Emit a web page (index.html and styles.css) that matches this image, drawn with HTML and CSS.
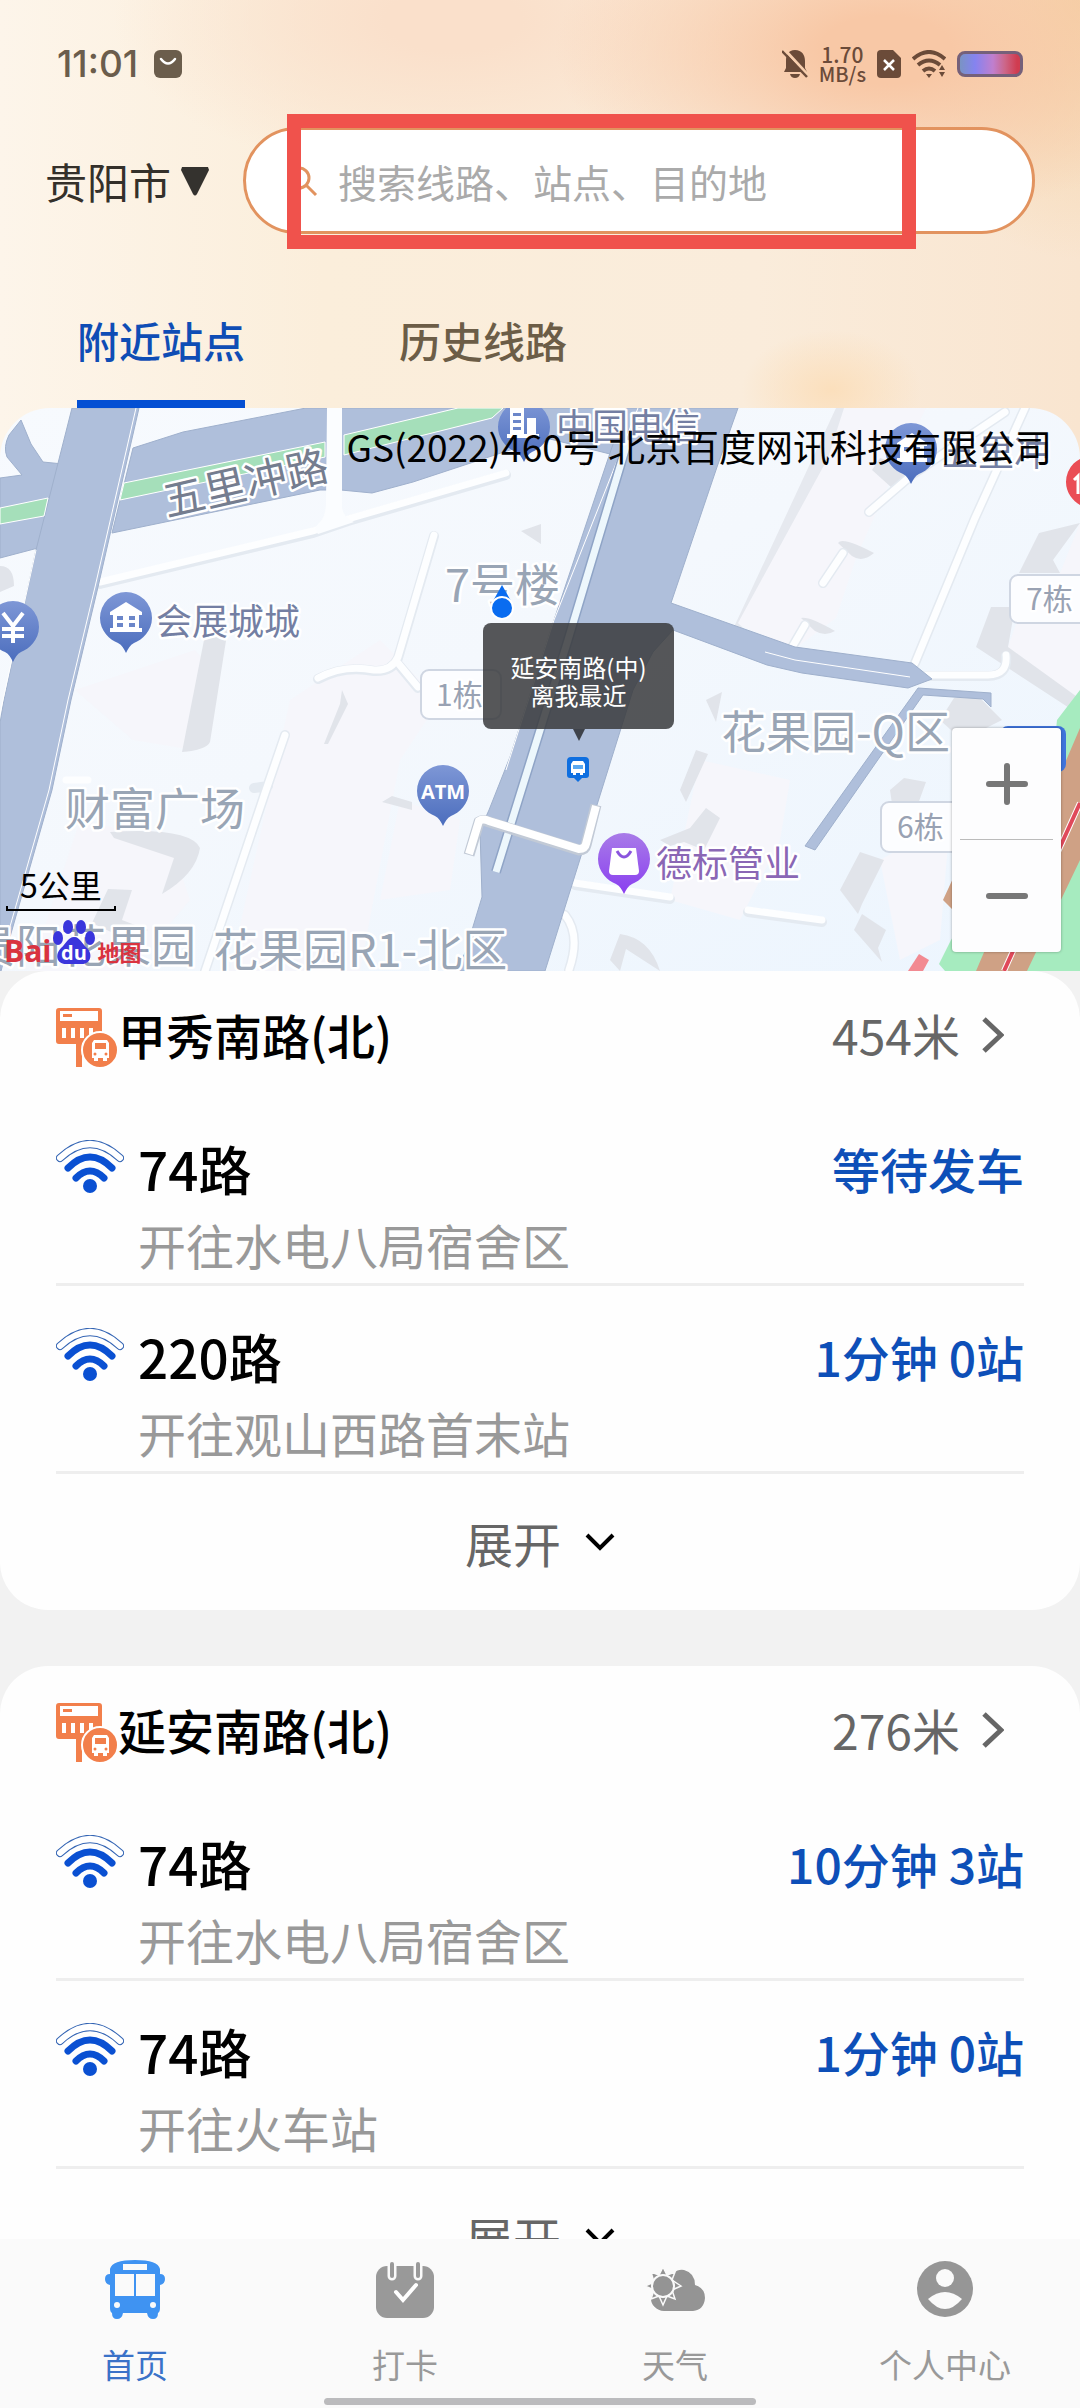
FILE: index.html
```html
<!DOCTYPE html>
<html lang="zh-CN">
<head>
    <meta charset="UTF-8">
    <meta name="viewport" content="width=device-width, initial-scale=1.0">
    <title>附近站点</title>
    <link rel="stylesheet" href="styles.css">
</head>
<body>
    <!-- shared icons -->
    <svg class="defs" width="0" height="0" aria-hidden="true">
        <symbol id="icon-stop" viewBox="0 0 62 62">
            <path fill="#f27f4b" d="M3 1h40a3 3 0 0 1 3 3v32H26v24h-6V37H3a3 3 0 0 1-3-3V4a3 3 0 0 1 3-3z"/>
            <path fill="#fff" d="M4 4h38v10H4zM6 21h4v10H6zM15 21h4v10h-4zM24 21h4v10h-4zM33 21h4v10h-4z"/>
            <rect x="7" y="7" width="9" height="3" fill="#f27f4b"/>
            <circle cx="44" cy="43" r="18" fill="#f27f4b" stroke="#fff" stroke-width="2"/>
            <path fill="#fff" d="M38 33h13l2 3v15h-2v3h-4v-3h-5v3h-4v-3h-2V36z"/>
            <path fill="#f27f4b" d="M39 36h11v6H39z"/>
            <circle cx="39" cy="47" r="1.5" fill="#f27f4b"/>
            <circle cx="50" cy="47" r="1.5" fill="#f27f4b"/>
        </symbol>
        <symbol id="icon-signal" viewBox="0 0 68 54">
            <g fill="none" stroke-linecap="round">
                <path d="M4 18Q34-10 64 18" stroke="#3465b4" stroke-width="8"/>
                <path d="M4 18Q34-10 64 18" stroke="#fff" stroke-width="6"/>
                <path d="M12 28Q34 6 56 28" stroke="#0a50d2" stroke-width="7"/>
                <path d="M20 38Q34 24 48 38" stroke="#0a50d2" stroke-width="7"/>
            </g>
            <circle cx="34" cy="46" r="7" fill="#0a50d2"/>
        </symbol>
        <symbol id="icon-right" viewBox="0 0 22 36">
            <path d="M2 2l17 16L2 34" fill="none" stroke="#666" stroke-width="5"/>
        </symbol>
        <symbol id="icon-down" viewBox="0 0 30 18">
            <path d="M2 2l13 13L28 2" fill="none" stroke="#000" stroke-width="4"/>
        </symbol>
        <symbol id="pin" viewBox="0 0 54 64">
            <path d="M27 1a26 26 0 0 1 26 26c0 13-10 22-18 25-4 2-6 6-8 10-2-4-4-8-8-10C11 49 1 40 1 27A26 26 0 0 1 27 1z"/>
        </symbol>
    </svg>

    <div class="app">
        <div class="top">
            <div class="status-bar">
                <span class="time">11:01</span>
                <svg width="28" height="28" viewBox="0 0 28 28">
                    <rect width="28" height="28" rx="6" fill="#6b5d4c"/>
                    <path d="M7 9q7 9 14 0" fill="none" stroke="#fff" stroke-width="2.5" stroke-linecap="round"/>
                </svg>
                <div class="status-right">
                    <svg width="26" height="30" viewBox="0 0 26 30">
                        <path fill="#6b4b39" d="M13 1c7 0 10 5 10 11v7l2 4H2l2-4v-7C4 6 6 1 13 1zM8 25h10q-1 4-5 4t-5-4z"/>
                        <path d="M2 0l25 27" stroke="#f8cfae" stroke-width="3"/>
                        <path d="M0 2l25 26" stroke="#6b4b39" stroke-width="2.5"/>
                    </svg>
                    <span class="speed"><b>1.70</b>MB/s</span>
                    <svg width="24" height="28" viewBox="0 0 24 28">
                        <path fill="#6b4b39" d="M4 0h12l8 8v16a4 4 0 0 1-4 4H4a4 4 0 0 1-4-4V4a4 4 0 0 1 4-4z"/>
                        <path d="M7 10l10 10M17 10L7 20" stroke="#fff" stroke-width="2.5"/>
                    </svg>
                    <svg width="34" height="28" viewBox="0 0 34 28">
                        <g fill="none" stroke="#6b4b39" stroke-width="4">
                            <path d="M1 9Q17-5 33 9"/>
                            <path d="M6 15q11-9 22 0"/>
                            <path d="M11 21q6-5 12 0"/>
                        </g>
                        <path fill="#6b4b39" d="M14 24h6l-3 4zM27 20l3-5 3 5zM27 22h6l-3 5z"/>
                    </svg>
                    <span class="battery"></span>
                </div>
            </div>

            <div class="search-row">
                <label class="city">
                    <select aria-label="城市">
                        <option>贵阳市</option>
                    </select>
                    <svg width="30" height="30" viewBox="0 0 30 30">
                        <path d="M2 1h26l1 3-12 24q-2 3-4 0L1 4z" fill="#34322e"/>
                    </svg>
                </label>
                <div class="search">
                    <svg width="32" height="32" viewBox="0 0 32 32">
                        <g fill="none" stroke="#e2935f" stroke-width="3">
                            <circle cx="13" cy="13" r="10"/>
                            <path d="M20 20l10 10"/>
                        </g>
                    </svg>
                    <input type="text" placeholder="搜索线路、站点、目的地" aria-label="搜索">
                    <div class="highlight"></div>
                </div>
            </div>

            <div class="tabs">
                <button class="tab active">附近站点</button>
                <button class="tab">历史线路</button>
            </div>

            <div class="map">
                <svg class="map-canvas" viewBox="0 408 1080 563" preserveAspectRatio="xMidYMid slice">
                    <defs>
                        <linearGradient id="land" x1="0" y1="0" x2="1" y2="1">
                            <stop offset="0" stop-color="#f7fafe"/>
                            <stop offset="0.45" stop-color="#f4f8fd"/>
                            <stop offset="1" stop-color="#ecf5fe"/>
                        </linearGradient>
                        <linearGradient id="pin-blue" x1="0" y1="0" x2="0" y2="1">
                            <stop offset="0" stop-color="#7e97d6"/>
                            <stop offset="1" stop-color="#4b6dbd"/>
                        </linearGradient>
                        <linearGradient id="pin-purple" x1="0" y1="0" x2="0" y2="1">
                            <stop offset="0" stop-color="#a87be8"/>
                            <stop offset="1" stop-color="#8a3ff0"/>
                        </linearGradient>
                    </defs>
                    <rect y="408" width="1080" height="563" fill="url(#land)"/>

                    <!-- blocks and buildings -->
                    <g fill="#f6f6fb">
                        <path d="M842 408h84l-30 60-40 90-20 60-40 30-60-24z"/>
                        <path d="M1060 573l20-50v180l-72-56 14-40z"/>
                        <path d="M75 690l120-40 18 20-20 80-60-10z"/>
                        <path d="M80 820l90 20 20 60-60 71H30z"/>
                        <path d="M290 700l90-60 60 60-40 60-40 211H230z"/>
                        <path d="M400 800l60 20-10 70-70 10z"/>
                        <path d="M700 760l90 20-10 60-40 80-70-20z"/>
                        <path d="M880 860l70-40-10 120-40 20z"/>
                    </g>
                    <g fill="#e1e4ea">
                        <path d="M836 408l8 0-16 50-90 165 8 8 40 16-4 4-48-24z" fill="#e6e9ef"/>
                        <path d="M1019 573l20-40 41-10-27 37 7 13zM976 647l15-40h24l-7 40 72 52v16z"/>
                        <path d="M838 543q4-7 36 10-12 10-22 3zM801 618q8-2 34 13-10 6-20 0zM872 470l20 18q20-6 18-20l-30-10z"/>
                        <path d="M204 640l24-12-18 114q-4 8-28 10zM110 832q80-5 90 16-4 26-38 46l12-36-60-20z"/>
                        <path d="M92 923l16-34 24 1-10 30 26 10-20 10zM342 690l6 14-20 40-4 0 16-40z"/>
                        <path d="M382 802l10-6 20 6v8zM0 566q14 0 14 20L0 592z"/>
                        <path d="M521 531l20-7v20zM680 790l16-40 12 4-22 48zM706 700l16-8-6 30z"/>
                        <path d="M660 840l30-12 16-20 14 10-16 32-20-8-14 4zM840 890l20-38 24 8-22 44-4 10zM854 930l8-16 24 16-8 18 4 14zM610 960l10-26q30 4 40 37l-34-22-6 22zM890 790l14-12 22 4-8 22h-26z"/>
                        <path d="M940 720l14-22 24-2 24 24-40 20z"/>
                    </g>

                    <!-- small paths -->
                    <g class="lane lane-shade">
                        <path d="M100 584l213-51 35-12 158-46M434 536l-36 122q-6 14-24 13-30-6-56 8M398 664l20 24M285 735l-20 58-60 178M1025 408l-50 110-60 145M1005 412l-92 62-44 38M843 553l-20 30M805 625l-14 24M924 676h64q20 0 18-20M575 885l95 14M748 912l74 10M565 915q16 20 4 55M254 788l14-2"/>
                    </g>
                    <g class="lane">
                        <path d="M100 582l213-51 35-12 158-46M434 535l-36 122q-6 14-24 13-30-6-56 8M398 663l20 24M285 735l-20 58-60 178M1025 408l-50 110-60 145M1005 412l-92 62-44 38M843 553l-20 30M805 625l-14 24M924 675h64q20 0 18-20M575 883l95 14M748 910l74 10M565 915q16 20 4 55M66 780h22"/>
                    </g>

                    <!-- main roads -->
                    <g class="road">
                        <path d="M133 448l50-16 123-24h320v50l-80-20-36 12-97 32-41 11-31-3-21 0-208 43z"/>
                        <path d="M0 478l22-3-15-18q-4-10 2-22l12-15 10 24 12 18 20 2-15 72-10 12L0 558z"/>
                        <path d="M72 408h67L98 587 71 700 52 790 10 937 0 975V723l4-23 32-150z"/>
                        <path d="M626 408h112l-21 59-46 136 124 44 117 16 20 16-24 9-106-15-35-8-94-35-20 22-20 38-88 281h-90l10-18 17-56-2-67 9-20 21-53 44-137 57-170z"/>
                        <path d="M918 688l73 5v14l-8-8-60-4-108 155-10-4z"/>
                    </g>
                    <g fill="#a5dfba" stroke="#fff" stroke-width="1">
                        <path d="M124 483l201-41v15l-205 43z"/>
                        <path d="M344 435l114-27h45l-11 10-148 37z"/>
                        <path d="M0 508l48-10-4 18-44 8z"/>
                    </g>
                    <path d="M0 714l3-14 33-150M136 408L95 587 68 700 49 790 7 937M638 408l-84 212-48 150M765 652l30 8 115 17" fill="none" stroke="#fff" stroke-width="1"/>
                    <path d="M628 440l-60 200-72 232" fill="none" stroke="#8fa4c6" stroke-width="10"/>
                    <path d="M628 440l-60 200-72 232" fill="none" stroke="#edf7fc" stroke-width="7"/>
                    <path d="M327 408h15v100q2 10 12 14l-36 12q-5-6 2-12 6-6 6-20z" fill="#fbfdff"/>
                    <path d="M469 855l10-33q4-3 10 0l90 28q6 0 7-5l10-40" fill="none" stroke="#c2cad6" stroke-width="11"/>
                    <path d="M469 854l10-33q4-3 10 0l90 28q6 0 7-5l10-38" fill="none" stroke="#fff" stroke-width="8"/>

                    <!-- park and railway on the right edge -->
                    <path d="M1080 690l-23 30-6 60-100 160-12 24 6 7h135z" fill="#a6ebbf"/>
                    <path d="M1080 728v132l-53 111h-51zM943 900l12-26v38z" fill="#cfa185"/>
                    <path d="M1004 971l76-168" stroke="#fff" stroke-width="6"/>
                    <path d="M1004 971l76-168" stroke="#e0495a" stroke-width="4"/>
                    <path d="M908 971l11-17 10 6-6 11z" fill="#f28a92"/>
                    <rect x="1000" y="726" width="66" height="46" rx="8" fill="#3f74dc"/>

                    <!-- place pins -->
                    <g fill="url(#pin-blue)">
                        <use href="#pin" x="99" y="591" width="54" height="64"/>
                        <use href="#pin" x="-14" y="600" width="54" height="64"/>
                        <use href="#pin" x="416" y="764" width="54" height="64"/>
                        <use href="#pin" x="497" y="400" width="54" height="64"/>
                        <use href="#pin" x="884" y="422" width="54" height="64"/>
                    </g>
                    <use href="#pin" x="597" y="832" width="54" height="64" fill="url(#pin-purple)"/>
                    <use href="#pin" x="1065" y="455" width="54" height="64" fill="#ea4d55"/>
                    <path d="M1074 480l4-4v18" fill="none" stroke="#fff" stroke-width="3"/>
                    <g fill="#fff">
                        <path d="M110 612l16-10 16 10v3h-3v13h3v4h-32v-4h3v-13h-3z"/>
                        <path d="M510 408h14v26h-14zM527 418h9v16h-9zM507 434h32v4h-32z"/>
                        <path d="M897 443l15-10 15 10v3h-3v12h3v4h-30v-4h3v-12h-3z"/>
                        <path d="M612 848h24l3 23q0 4-4 4h-22q-4 0-4-4z"/>
                    </g>
                    <path d="M117 616h6v4h-6zM129 616h6v4h-6zM117 623h6v4h-6zM129 623h6v4h-6zM904 447h5v4h-5zM915 447h5v4h-5zM513 413h8v3h-8zM513 420h8v3h-8zM513 427h8v3h-8z" fill="#6b86c9"/>
                    <path d="M617 851q7 12 14 0" fill="none" stroke="#8a55dd" stroke-width="3"/>
                    <path d="M3 613l10 13 10-13M13 626v17M2 629h22M2 636h22" fill="none" stroke="#fff" stroke-width="4"/>
                    <text class="atm" x="443" y="799">ATM</text>

                    <!-- house number tags -->
                    <g fill="#fcfdff" stroke="#cfd6e2" stroke-width="2">
                        <rect x="421" y="670" width="80" height="49" rx="8"/>
                        <rect x="1010" y="575" width="90" height="48" rx="8"/>
                        <rect x="881" y="802" width="90" height="50" rx="8"/>
                    </g>
                    <g class="tag">
                        <text x="436" y="706">1栋</text>
                        <text x="1026" y="610">7栋</text>
                        <text x="897" y="838">6栋</text>
                    </g>

                    <g class="area">
                        <text x="445" y="602">7号楼</text>
                        <text x="65" y="826">财富广场</text>
                        <text x="196" y="963" text-anchor="end">贵阳花果园</text>
                        <text x="213" y="967">花果园R1-北区</text>
                        <text x="721" y="749">花果园-Q区</text>
                    </g>
                    <g class="place">
                        <text x="156" y="635">会展城城</text>
                        <text x="556" y="440">中国电信</text>
                        <text x="942" y="466">五里冲</text>
                        <text class="shop" x="656" y="877">德标管业</text>
                        <text class="road-name" transform="translate(167 517) rotate(-13)">五里冲路</text>
                    </g>

                    <!-- my position -->
                    <path d="M502 585l9 16h-18z" fill="#0a6cf0"/>
                    <circle cx="502" cy="608" r="11" fill="#0a6cf0" stroke="#fff" stroke-width="2"/>
                    <!-- bus stop marker -->
                    <path d="M571 757h14q4 0 4 4v14q0 3-3 3h-4l-4 4-4-4h-4q-3 0-3-3v-14q0-4 4-4z" fill="#0f6fe0"/>
                    <path d="M573 761h10l2 3v9h-2v2h-3v-2h-4v2h-3v-2h-2v-9z" fill="#fff"/>
                    <path d="M573 765h10v4h-10z" fill="#5aa8f0"/>
                </svg>

                <div class="copyright">GS(2022)460号 北京百度网讯科技有限公司</div>
                <div class="bubble">延安南路(中)<br>离我最近</div>
                <div class="scale">5公里</div>
                <div class="baidu">
                    <span>Bai</span>
                    <svg width="42" height="46" viewBox="0 0 42 46">
                        <g fill="#3a35dc">
                            <ellipse cx="15" cy="8" rx="5" ry="7"/>
                            <ellipse cx="28" cy="8" rx="5" ry="7"/>
                            <ellipse cx="5" cy="19" rx="5" ry="7"/>
                            <ellipse cx="37" cy="19" rx="5" ry="7"/>
                            <path d="M21 18c6 0 8 7 13 11 6 6 4 16-5 16H13C3 45 2 35 8 29c5-4 7-11 13-11z"/>
                        </g>
                        <text x="21" y="41" text-anchor="middle">du</text>
                    </svg>
                    <span class="baidu-map">地图</span>
                </div>
                <div class="zoom">
                    <button aria-label="放大">
                        <svg width="42" height="42" viewBox="0 0 42 42"><path d="M21 3v36M3 21h36" stroke="#777" stroke-width="6" stroke-linecap="round"/></svg>
                    </button>
                    <button aria-label="缩小">
                        <svg width="42" height="42" viewBox="0 0 42 42"><path d="M3 21h36" stroke="#777" stroke-width="6" stroke-linecap="round"/></svg>
                    </button>
                </div>
            </div>
        </div>

        <main class="stations">
            <section class="card">
                <a class="station" href="#">
                    <svg class="stop-icon"><use href="#icon-stop"/></svg>
                    <h2>甲秀南路(北)</h2>
                    <span class="distance">454米</span>
                    <svg class="right-icon"><use href="#icon-right"/></svg>
                </a>
                <div class="line">
                    <svg class="signal-icon"><use href="#icon-signal"/></svg>
                    <div class="line-info">
                        <h3>74路</h3>
                        <p>开往水电八局宿舍区</p>
                    </div>
                    <span class="arrival">等待发车</span>
                </div>
                <div class="line">
                    <svg class="signal-icon"><use href="#icon-signal"/></svg>
                    <div class="line-info">
                        <h3>220路</h3>
                        <p>开往观山西路首末站</p>
                    </div>
                    <span class="arrival">1分钟 0站</span>
                </div>
                <button class="expand">展开 <svg class="down-icon"><use href="#icon-down"/></svg></button>
            </section>

            <section class="card">
                <a class="station" href="#">
                    <svg class="stop-icon"><use href="#icon-stop"/></svg>
                    <h2>延安南路(北)</h2>
                    <span class="distance">276米</span>
                    <svg class="right-icon"><use href="#icon-right"/></svg>
                </a>
                <div class="line">
                    <svg class="signal-icon"><use href="#icon-signal"/></svg>
                    <div class="line-info">
                        <h3>74路</h3>
                        <p>开往水电八局宿舍区</p>
                    </div>
                    <span class="arrival">10分钟 3站</span>
                </div>
                <div class="line">
                    <svg class="signal-icon"><use href="#icon-signal"/></svg>
                    <div class="line-info">
                        <h3>74路</h3>
                        <p>开往火车站</p>
                    </div>
                    <span class="arrival">1分钟 0站</span>
                </div>
                <button class="expand">展开 <svg class="down-icon"><use href="#icon-down"/></svg></button>
            </section>
        </main>

        <nav class="tab-bar">
            <a class="active" href="#">
                <svg width="60" height="60" viewBox="0 0 60 60">
                    <path fill="#3f93f2" d="M5 10q2-9 25-9t25 9v5q5 0 5 5t-5 6v23q0 4-2 5 0 6-5 6t-6-6H18q-1 6-6 6t-5-6q-2-1-2-5V26q-5-1-5-6t5-5z"/>
                    <path fill="#fafafa" d="M18 5h24v6H18zM10 15h19v22H10zM31 15h19v22H31z"/>
                    <circle cx="12" cy="46" r="3" fill="#fafafa"/>
                    <circle cx="48" cy="46" r="3" fill="#fafafa"/>
                </svg>
                首页
            </a>
            <a href="#">
                <svg width="60" height="60" viewBox="0 0 60 60">
                    <rect x="1" y="7" width="58" height="52" rx="11" fill="#999"/>
                    <path d="M17 6v11M43 6v11" stroke="#fafafa" stroke-width="9" stroke-linecap="round"/>
                    <path d="M17 5v12M43 5v12" stroke="#999" stroke-width="4" stroke-linecap="round"/>
                    <path d="M21 33l7 8 13-15" fill="none" stroke="#fff" stroke-width="4" stroke-linecap="round"/>
                </svg>
                打卡
            </a>
            <a href="#">
                <svg width="60" height="60" viewBox="0 0 60 60">
                    <path fill="#949494" d="M19 52a13 13 0 0 1-13-14q4-10 19-12l4-12q4-4 10-3 11 3 11 15 10 3 10 13-1 12-12 13z"/>
                    <path fill="#949494" stroke="#fafafa" stroke-width="1.5" d="M18 8l4 8 8-3-3 8 9 6-9 4 3 9-8-3-4 9-4-9-8 3 3-9-9-4 9-4-3-10 8 3z"/>
                    <circle cx="18" cy="27" r="11" fill="#949494" stroke="#fafafa" stroke-width="2"/>
                </svg>
                天气
            </a>
            <a href="#">
                <svg width="60" height="60" viewBox="0 0 60 60">
                    <circle cx="30" cy="30" r="28" fill="#969696"/>
                    <circle cx="30" cy="19" r="9" fill="#fafafa"/>
                    <path d="M13 40q17-14 34 0-17 20-34 0z" fill="#fafafa"/>
                </svg>
                个人中心
            </a>
            <div class="home-bar"></div>
        </nav>
    </div>
</body>
</html>
```
FILE: styles.css
```css
* {
    box-sizing: border-box;
}

body, html {
    height: 100%;
    margin: 0;
    padding: 0;
    font-family: "Noto Sans CJK SC", sans-serif;
    background-color: #f2f2f2;
}

h2, h3, p {
    margin: 0;
    font-weight: 400;
}

a {
    text-decoration: none;
    color: inherit;
}

button, input, select {
    font-family: inherit;
    border: none;
    background: none;
    padding: 0;
    margin: 0;
}

svg {
    display: block;
    flex-shrink: 0;
}

.defs {
    position: absolute;
}

.app {
    display: flex;
    flex-direction: column;
    height: 100vh;
    overflow: hidden;
}

.top {
    flex-shrink: 0;
    background:
        radial-gradient(ellipse 90px 60px at 77% 390px, #fbdfbc 0%, rgba(251, 223, 188, 0) 100%),
        radial-gradient(ellipse 330px 170px at 82% 50px, #f8c8a6 20%, rgba(248, 200, 166, 0) 100%),
        radial-gradient(ellipse 200px 260px at 100% 0, #f4d2a6 0%, rgba(244, 210, 166, 0) 100%),
        radial-gradient(ellipse 340px 160px at 42% 20px, #fae0cb 20%, rgba(250, 224, 203, 0) 100%),
        linear-gradient(to right, #fdf5ea 0%, #fbeedb 30%, #faecdb 70%, #f9e5d0 100%);
}

/* status bar */
.status-bar {
    display: flex;
    align-items: center;
    gap: 16px;
    height: 127px;
    padding: 0 57px;
}

.time {
    font-family: Inter, sans-serif;
    font-size: 37px;
    font-weight: 500;
    color: #6b5d4c;
}

.status-right {
    display: flex;
    align-items: center;
    gap: 11px;
    margin-left: auto;
}

.speed {
    font-size: 20px;
    line-height: 19px;
    font-weight: 500;
    text-align: center;
    color: #6b4b39;
}

.speed b {
    display: block;
    font-weight: 500;
    font-size: 21px;
}

.battery {
    width: 66px;
    height: 26px;
    border: 3px solid #75607a;
    border-radius: 8px;
    background: linear-gradient(to right, #7a93c4, #8583f0 25%, #c07fce 55%, #cc6688 75%, #d03c50 95%);
}

/* search */
.search-row {
    display: flex;
    align-items: center;
    gap: 33px;
    padding: 0 45px;
}

.city {
    display: flex;
    align-items: center;
    gap: 8px;
}

.city select {
    appearance: none;
    font-size: 42px;
    line-height: 60px;
    color: #34302a;
}

.search {
    position: relative;
    flex: 1;
    display: flex;
    align-items: center;
    gap: 20px;
    height: 107px;
    padding-left: 40px;
    border: 3px solid #e2935f;
    border-radius: 54px;
    background-color: #fff;
}

.search input {
    flex: 1;
    min-width: 0;
    margin-right: 40px;
    font-size: 39px;
    line-height: 56px;
    outline: none;
}

.search input::placeholder {
    color: #aaa;
    opacity: 1;
}

.highlight {
    position: absolute;
    top: -16px;
    bottom: -18px;
    left: 41px;
    right: 116px;
    border: 14px solid #f0524c;
    pointer-events: none;
}

/* tabs */
.tabs {
    display: flex;
    gap: 154px;
    padding: 76px 77px 0;
}

.tab {
    padding-bottom: 30px;
    border-bottom: 8px solid transparent;
    font-size: 42px;
    line-height: 60px;
    font-weight: 500;
    color: #6c5d47;
}

.tab.active {
    color: #0f4db5;
    border-bottom-color: #044fd3;
}

/* map */
.map {
    position: relative;
    height: 563px;
    overflow: hidden;
    border-radius: 50px 50px 0 0;
}

.map-canvas {
    width: 100%;
    height: 100%;
}

.map-canvas text {
    paint-order: stroke;
    stroke: #fff;
    stroke-width: 5px;
    stroke-linejoin: round;
}

.lane path {
    fill: none;
    stroke: #fdfeff;
    stroke-width: 7;
    stroke-linecap: round;
}

.lane-shade path {
    stroke: #e4eaf1;
    stroke-width: 10;
}

.road {
    fill: #afbfdb;
    stroke: #9fb0cc;
    stroke-width: 1;
}

.area {
    font-size: 45px;
    fill: #99a5b5;
    font-weight: 400;
}

.place {
    font-size: 36px;
    fill: #747fa3;
    font-weight: 400;
}

.place .shop {
    fill: #8a67b5;
}

.place .road-name {
    font-size: 42px;
    fill: #757d8f;
}

.tag {
    font-size: 30px;
    fill: #99a2b3;
}

.map-canvas .atm {
    font-family: "Open Sans", sans-serif;
    font-size: 20px;
    font-weight: 700;
    fill: #fff;
    stroke: none;
    text-anchor: middle;
}

.copyright {
    position: absolute;
    top: 14px;
    right: 28px;
    font-size: 37px;
    line-height: 48px;
    color: #000;
}

.bubble {
    position: absolute;
    top: 215px;
    left: 483px;
    width: 191px;
    height: 106px;
    padding-top: 30px;
    border-radius: 8px;
    background-color: rgba(58, 59, 62, 0.86);
    color: #fff;
    font-size: 24px;
    line-height: 28px;
    text-align: center;
}

.bubble::after {
    content: "";
    position: absolute;
    top: 100%;
    left: 50%;
    margin-left: -6px;
    border: 6px solid transparent;
    border-top: 12px solid #3f434b;
    border-bottom: none;
}

.scale {
    position: absolute;
    left: 6px;
    bottom: 60px;
    width: 110px;
    padding-bottom: 4px;
    border: 2px solid #000;
    border-top: none;
    font-size: 32px;
    line-height: 42px;
    text-align: center;
    border-image: linear-gradient(to top, #000 5px, transparent 5px) 2;
}

.baidu {
    position: absolute;
    left: 4px;
    bottom: 6px;
    display: flex;
    align-items: flex-end;
    gap: 2px;
    color: #d9333f;
    font-family: "Open Sans", sans-serif;
    font-size: 30px;
    line-height: 28px;
    font-weight: 700;
}

.baidu .baidu-map {
    font-family: "Noto Sans CJK SC", sans-serif;
    font-size: 22px;
}

.map .baidu text {
    font-family: "Open Sans", sans-serif;
    font-size: 20px;
    fill: #fff;
}

.zoom {
    position: absolute;
    right: 19px;
    bottom: 19px;
    display: flex;
    flex-direction: column;
    width: 109px;
    padding: 0 8px;
    border-radius: 4px;
    background-color: #fdfdfe;
    box-shadow: 0 0 3px rgba(0, 0, 0, 0.35);
}

.zoom button {
    display: flex;
    align-items: center;
    justify-content: center;
    height: 112px;
}

.zoom button:first-child {
    border-bottom: 1px solid #bbb;
}

/* station cards */
.stations {
    flex: 1;
    min-height: 0;
    overflow: hidden;
    display: flex;
    flex-direction: column;
    gap: 56px;
}

.card {
    flex-shrink: 0;
    padding: 36px 56px 0;
    border-radius: 48px;
    background-color: #fefefe;
}

.station {
    display: flex;
    align-items: flex-start;
    height: 62px;
    margin-bottom: 29px;
}

.stop-icon {
    width: 62px;
    height: 62px;
}

.station h2 {
    font-size: 48px;
    line-height: 54px;
    font-weight: 500;
}

.distance {
    margin-left: auto;
    font-size: 48px;
    line-height: 54px;
    color: #666;
}

.right-icon {
    width: 22px;
    height: 36px;
    margin: 10px 20px 0 22px;
}

.line {
    display: flex;
    align-items: flex-start;
    height: 188px;
    padding-top: 34px;
    border-bottom: 3px solid #eee;
}

.signal-icon {
    width: 68px;
    height: 54px;
    margin: 8px 14px 0 0;
}

.line-info {
    flex: 1;
}

.line h3 {
    font-size: 53px;
    line-height: 72px;
    font-weight: 500;
}

.line p {
    margin-top: 10px;
    font-size: 48px;
    line-height: 60px;
    color: #999;
}

.arrival {
    font-size: 48px;
    line-height: 72px;
    font-weight: 500;
    color: #0d4fb8;
}

.expand {
    display: flex;
    align-items: center;
    justify-content: center;
    gap: 24px;
    width: 100%;
    height: 136px;
    font-size: 48px;
    line-height: 60px;
    color: #666;
}

.down-icon {
    width: 30px;
    height: 18px;
}

/* bottom tab bar */
.tab-bar {
    position: relative;
    flex-shrink: 0;
    display: flex;
    height: 169px;
    padding-top: 20px;
    background-color: #fafafa;
}

.tab-bar a {
    flex: 1;
    display: flex;
    flex-direction: column;
    align-items: center;
    gap: 22px;
    font-size: 33px;
    line-height: 46px;
    color: #999;
}

.tab-bar .active {
    color: #3a72c8;
}

.home-bar {
    position: absolute;
    bottom: 3px;
    left: 30%;
    width: 40%;
    height: 7px;
    border-radius: 4px;
    background-color: #bbbbbd;
}
```
